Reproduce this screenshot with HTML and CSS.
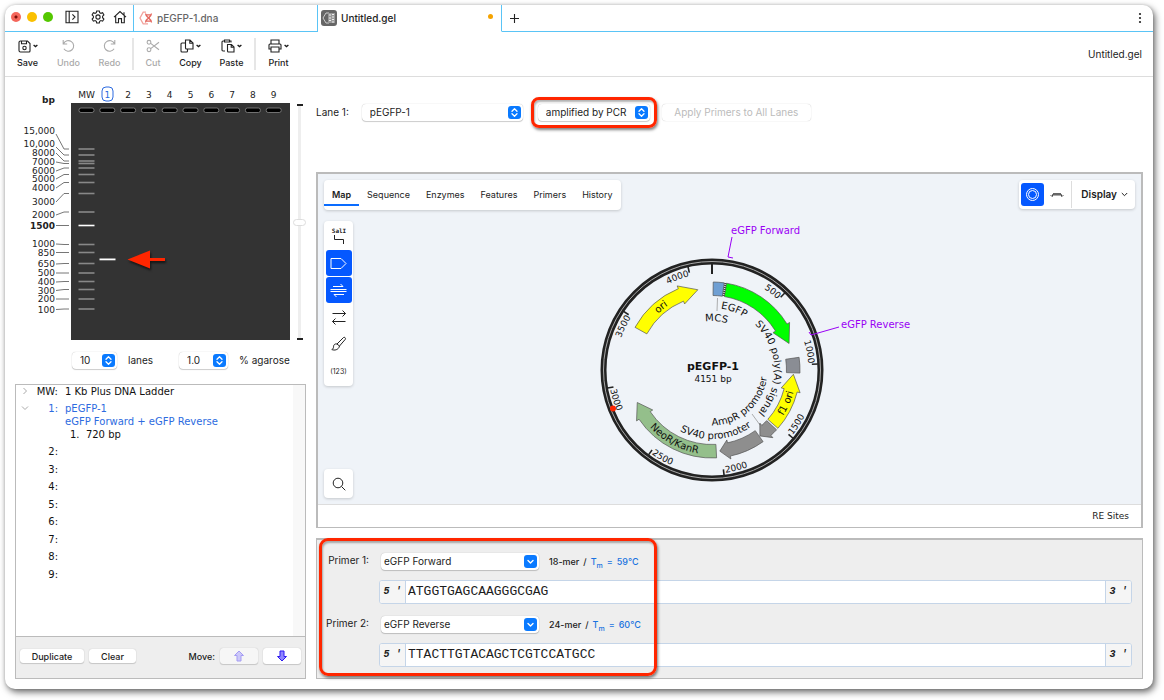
FILE: index.html
```html
<!DOCTYPE html>
<html lang="en">

<head>
  <meta charset="UTF-8" />
  <meta name="viewport" content="width=device-width, initial-scale=1.0" />
  <title>Untitled.gel</title>
  <link rel="stylesheet" href="styles.css">
</head>

<body>
  <svg class="symbols" aria-hidden="true">
    <symbol id="stepper" viewBox="0 0 13 13">
      <rect width="13" height="13" rx="3" fill="#0a7aff" />
      <path d="M4 5.2 6.5 2.7 9 5.2M4 7.8l2.5 2.5L9 7.8" fill="none" stroke="#fff" stroke-width="1.3" stroke-linecap="round" stroke-linejoin="round" />
    </symbol>
    <symbol id="dropdown" viewBox="0 0 13 13">
      <rect width="13" height="13" rx="3" fill="#0a7aff" />
      <path d="M4 5.4 6.5 7.9 9 5.4" fill="none" stroke="#fff" stroke-width="1.4" stroke-linecap="round" stroke-linejoin="round" />
    </symbol>
    <symbol id="caret" viewBox="0 0 5 4">
      <path d="M.6.9 2.5 2.6 4.4.9" fill="none" stroke="currentColor" stroke-width="1.3" />
    </symbol>
  </svg>

  <div class="window">
    <header class="titlebar">
      <div class="controls">
        <span class="light red"></span>
        <span class="light yellow"></span>
        <span class="light green"></span>
        <button class="icon-button" aria-label="Toggle side panel">
          <svg width="14" height="14" viewBox="0 0 14 14"><path d="M1 1.2h12v11.6H1zM4.2 1.2v11.6M7.4 4.4 10 7l-2.6 2.6" /></svg>
        </button>
        <button class="icon-button gear" aria-label="Settings">
          <svg width="14" height="14" viewBox="0 0 14 14"><path d="M5.7 1h2.6l.4 1.7 1.2.6 1.7-.6 1.3 2.2-1.3 1.3v1.5l1.3 1.3-1.3 2.2-1.7-.6-1.2.7-.4 1.7H5.7l-.4-1.7-1.2-.7-1.7.6L1.1 9l1.3-1.3V6.2L1.1 4.9l1.3-2.2 1.7.6 1.2-.6z" /><circle cx="7" cy="7" r="2.1" /></svg>
        </button>
        <button class="icon-button" aria-label="Home">
          <svg width="14" height="14" viewBox="0 0 14 14"><path d="M1 7.2 7 1.6l6 5.6M2.7 6.2v6.6h2.8V8.6h3v4.2h2.8V6.2M11 5V2.2" /></svg>
        </button>
      </div>
      <nav class="tabs">
        <a class="tab" href="#">
          <svg width="14" height="14" viewBox="0 0 14 14"><path d="M7 1.2H4.2L1 7l3.2 5.8H9" fill="none" stroke="#f2a29c" stroke-width="1.3" /><path d="M6.5 2.6c0 4 6 4.6 6 8.8M12.5 2.6c0 4-6 4.6-6 8.8M7 3.8h5M7 10.2h5M8.4 7h2.5" fill="none" stroke="#e4685f" stroke-width="1.3" /></svg>
          <span>pEGFP-1.dna</span>
        </a>
        <a class="tab active" href="#">
          <svg width="16" height="16" viewBox="0 0 16 16"><rect width="16" height="16" rx="3" fill="#666" /><path d="M8 3H5L2 8l3 5h3" fill="none" stroke="#ccc" /><path d="M7 3h7v10H7z" fill="#999" /><path d="M8 5h2M8 8h2M8 10.5h2M11 4.5h2M11 7h2M11 9.5h2M11 12h2" stroke="#eee" /></svg>
          <span>Untitled.gel</span>
          <i class="modified"></i>
        </a>
        <div class="tab-rest">
          <button class="icon-button" aria-label="New tab">
            <svg width="9" height="9" viewBox="0 0 9 9"><path d="M4.5 0v9M0 4.5h9" /></svg>
          </button>
          <button class="icon-button" aria-label="More">
            <svg width="4" height="12" viewBox="0 0 4 12"><g fill="#222" stroke="none"><circle cx="2" cy="2" r="1.1" /><circle cx="2" cy="6" r="1.1" /><circle cx="2" cy="10" r="1.1" /></g></svg>
          </button>
        </div>
      </nav>
    </header>

    <div class="toolbar">
      <button class="tool">
        <span class="tool-icon"><svg width="13" height="13" viewBox="0 0 13 13"><path d="M2.5 1h7L12 3.5V11a1 1 0 0 1-1 1H2.5A1.5 1.5 0 0 1 1 10.5v-8A1.5 1.5 0 0 1 2.5 1zM3.5 1.2v2.6h5V1.2" /><circle cx="6.5" cy="8" r="1.7" /></svg><svg class="caret"><use href="#caret" /></svg></span>
        Save
      </button>
      <button class="tool" disabled>
        <span class="tool-icon"><svg width="13" height="14" viewBox="0 0 13 14"><path d="M1.2 1v4h4M1.5 4.8a5.3 5.3 0 1 1 .4 5" /></svg></span>
        Undo
      </button>
      <button class="tool" disabled>
        <span class="tool-icon"><svg width="13" height="14" viewBox="0 0 13 14"><path d="M11.8 1v4h-4M11.5 4.8a5.3 5.3 0 1 0-.4 5" /></svg></span>
        Redo
      </button>
      <span class="divider"></span>
      <button class="tool narrow" disabled>
        <span class="tool-icon"><svg width="14" height="14" viewBox="0 0 14 14"><circle cx="3" cy="3.3" r="1.9" /><circle cx="3" cy="10.7" r="1.9" /><path d="m4.7 4.4 8.3 6.3M4.7 9.6 13 3.3" /></svg></span>
        Cut
      </button>
      <button class="tool">
        <span class="tool-icon"><svg width="14" height="14" viewBox="0 0 14 14"><path d="M5.5 1H10l3 3v6H6.5a1 1 0 0 1-1-1zM9.8 1v3.2H13M5.5 4H2a1 1 0 0 0-1 1v7a1 1 0 0 0 1 1h4.5a1 1 0 0 0 1-1v-2" /></svg><svg class="caret"><use href="#caret" /></svg></span>
        Copy
      </button>
      <button class="tool">
        <span class="tool-icon"><svg width="14" height="14" viewBox="0 0 14 14"><path d="M4 12H2a1 1 0 0 1-1-1V3a1 1 0 0 1 1-1h1.5M8.5 2H10v1.5M3.5 1h5v2h-5zM6.5 5.5h4L13 8v5H7.5a1 1 0 0 1-1-1zM10.2 5.5v2.7H13" /></svg><svg class="caret"><use href="#caret" /></svg></span>
        Paste
      </button>
      <span class="divider"></span>
      <button class="tool">
        <span class="tool-icon"><svg width="14" height="14" viewBox="0 0 14 14"><path d="M3 5V1h8v4M3 10H1V6a1 1 0 0 1 1-1h10a1 1 0 0 1 1 1v4h-2M3 8h8v5H3z" /></svg><svg class="caret"><use href="#caret" /></svg></span>
        Print
      </button>
      <span class="document-name">Untitled.gel</span>
    </div>

    <main class="content">
      <section class="gel-column">
        <div class="gel-row">
          <svg id="gel" class="gel" viewBox="0 0 278 268" role="img" aria-label="Simulated agarose gel">
            <rect x="56" y="26" width="219" height="237" fill="#333" />
            <text class="bold" x="40" y="26" text-anchor="end">bp</text>
            <rect x="87" y="10" width="11" height="14" rx="4" fill="none" stroke="#2d6be0" />
          </svg>
          <div class="exposure">
            <span class="mark"></span>
            <input type="range" min="0" max="100" value="50" aria-label="Band intensity" />
            <span class="mark"></span>
          </div>
        </div>

        <div class="gel-options">
          <span class="popup lanes"><select id="lanes"><option>10</option></select><svg><use href="#stepper" /></svg></span>
          <label for="lanes">lanes</label>
          <span class="popup agarose"><select id="agarose"><option>1.0</option></select><svg><use href="#stepper" /></svg></span>
          <label for="agarose">% agarose</label>
        </div>

        <div class="lane-panel">
          <div class="lane-list">
            <div class="lane-row">
              <svg class="disclosure" viewBox="0 0 8 8"><path d="M2.5 1 5.5 4l-3 3" /></svg>
              <b>MW:</b>
              <span>1 Kb Plus DNA Ladder</span>
            </div>
            <div class="lane-row selected">
              <svg class="disclosure" viewBox="0 0 8 8"><path d="M1 2.5 4 5.5l3-3" /></svg>
              <b>1:</b>
              <div>
                <p>pEGFP-1</p>
                <p>eGFP Forward + eGFP Reverse</p>
                <p class="fragment">1.&nbsp; 720 bp</p>
              </div>
            </div>
            <div class="empty-lanes">
              <span>2:</span>
              <span>3:</span>
              <span>4:</span>
              <span>5:</span>
              <span>6:</span>
              <span>7:</span>
              <span>8:</span>
              <span>9:</span>
            </div>
          </div>
          <div class="lane-actions">
            <button class="push">Duplicate</button>
            <button class="push clear">Clear</button>
            <span class="move-label">Move:</span>
            <button class="push move" aria-label="Move up" disabled>
              <svg width="12" height="12" viewBox="0 0 12 12"><path d="M6 1 1.5 5.5H4V11h4V5.5h2.5z" /></svg>
            </button>
            <button class="push move" aria-label="Move down">
              <svg width="12" height="12" viewBox="0 0 12 12"><path d="M6 11 1.5 6.5H4V1h4v5.5h2.5z" /></svg>
            </button>
          </div>
        </div>
      </section>

      <section class="lane-column">
        <div class="lane-source">
          <label for="source">Lane 1:</label>
          <span class="popup source"><select id="source"><option>pEGFP-1</option></select><svg><use href="#stepper" /></svg></span>
          <span class="highlight">
            <span class="popup"><select aria-label="Treatment"><option>amplified by PCR</option></select><svg><use href="#stepper" /></svg></span>
          </span>
          <button class="apply" disabled>Apply Primers to All Lanes</button>
        </div>

        <div class="map-panel">
          <div class="map-view">
            <div class="map-top">
              <nav class="views card">
                <button class="active">Map</button>
                <button>Sequence</button>
                <button>Enzymes</button>
                <button>Features</button>
                <button>Primers</button>
                <button>History</button>
              </nav>
              <div class="display card">
                <button class="square on" aria-label="Circular">
                  <svg width="15" height="15" viewBox="0 0 15 15"><circle cx="7.5" cy="7.5" r="6" /><circle cx="7.5" cy="7.5" r="4" /></svg>
                </button>
                <button class="square" aria-label="Linear">
                  <svg width="14" height="6" viewBox="0 0 14 6"><path d="M0 3.5h14" stroke="#aaa" /><path d="M3 1.5h8M3 2.5h8" stroke="#666" /><path d="M2 5l1-3M12 5l-1-3" stroke="#444" /></svg>
                </button>
                <button class="display-menu">Display <svg width="7" height="5" viewBox="0 0 7 5"><path d="m.8 1 2.7 2.7L6.2 1" /></svg></button>
              </div>
            </div>
            <div class="map-body">
              <div class="side">
                <div class="map-tools card">
                  <button class="square" aria-label="Enzymes">
                    <svg width="16" height="20" viewBox="0 0 16 20"><text x="8" y="7" text-anchor="middle">SalI</text><path d="M3.5 9v4.5h9V18" /></svg>
                  </button>
                  <button class="square on" aria-label="Features">
                    <svg width="17" height="13" viewBox="0 0 17 13"><path d="M1 1.5h10l5 5-5 5H1z" /></svg>
                  </button>
                  <button class="square on" aria-label="Primers">
                    <svg width="17" height="15" viewBox="0 0 17 15"><path d="M3 3.5h10L10.5 1M14 11.5H4L6.5 14" /><path d="M.5 6.5h16M.5 8.5h16" /></svg>
                  </button>
                  <button class="square" aria-label="ORFs">
                    <svg width="16" height="16" viewBox="0 0 16 16"><path d="M1.5 4.5h13M11.5 1.5l3 3-3 3M14.5 12.5h-13M4.5 9.5l-3 3 3 3" /></svg>
                  </button>
                  <button class="square" aria-label="Colors">
                    <svg width="16" height="16" viewBox="0 0 16 16"><path d="m6 8 6.5-6.5c.8-.8 2.7.6 1.8 1.8L8.5 10zM6 8c-2-.5-3.5.7-3.5 2.8 0 1.4-.6 2.2-1.7 2.7 2.5 1.2 6.7.6 7.7-3.5" /></svg>
                  </button>
                  <button class="square number">(123)</button>
                </div>
                <button class="search card" aria-label="Find">
                  <svg width="14" height="14" viewBox="0 0 14 14"><circle cx="6" cy="6" r="4.8" /><path d="m9.5 9.5 3.8 3.8" /></svg>
                </button>
              </div>
              <svg id="plasmid" class="plasmid" viewBox="-133 -149 330 275" role="img" aria-label="pEGFP-1 plasmid map">
                <circle r="108.5" fill="none" stroke="#222" stroke-width="6" />
                <circle r="108.5" fill="none" stroke="#aaa" stroke-width="1" />
                <path d="M0-107v11" stroke="#222" stroke-width="2" />
                <path d="M5.5-72 5-59M40 44l8 11" fill="none" stroke="#999" stroke-width=".8" />
                <path class="primer-line" d="m20-133-4 20 5 1M97-38l2 3 28-8" />
                <text class="primer-name" x="19" y="-136">eGFP Forward</text>
                <text class="primer-name" x="129" y="-42">eGFP Reverse</text>
                <text class="plasmid-name" x="1" y="0" text-anchor="middle">pEGFP-1</text>
                <text x="1" y="12" text-anchor="middle">4151 bp</text>
              </svg>
            </div>
          </div>
          <div class="map-footer">RE Sites</div>
        </div>

        <div class="primer-panel">
          <div class="primer">
            <label for="primer1">Primer 1:</label>
            <span class="popup combo"><select id="primer1"><option>eGFP Forward</option></select><svg><use href="#dropdown" /></svg></span>
            <span class="primer-info"><span>18-mer</span><span>/</span><a href="#">T<sub>m</sub></a><a href="#">=</a><a href="#">59°C</a></span>
            <div class="sequence">
              <i>5 '</i>
              <input type="text" value="ATGGTGAGCAAGGGCGAG" aria-label="Primer 1 sequence" />
              <i>3 '</i>
            </div>
          </div>
          <div class="primer">
            <label for="primer2">Primer 2:</label>
            <span class="popup combo"><select id="primer2"><option>eGFP Reverse</option></select><svg><use href="#dropdown" /></svg></span>
            <span class="primer-info"><span>24-mer</span><span>/</span><a href="#">T<sub>m</sub></a><a href="#">=</a><a href="#">60°C</a></span>
            <div class="sequence">
              <i>5 '</i>
              <input type="text" value="TTACTTGTACAGCTCGTCCATGCC" aria-label="Primer 2 sequence" />
              <i>3 '</i>
            </div>
          </div>
          <div class="callout"></div>
        </div>
      </section>
    </main>
  </div>

  <script>
    const SVG = "http://www.w3.org/2000/svg";

    function add(parent, tag, attrs, text) {
      const el = document.createElementNS(SVG, tag);
      for (const key in attrs) el.setAttribute(key, attrs[key]);
      if (text) el.textContent = text;
      parent.appendChild(el);
      return el;
    }

    // ---- gel ----
    const gel = document.getElementById("gel");
    const lanes = ["MW", "1", "2", "3", "4", "5", "6", "7", "8", "9"];
    const laneX = (i) => 71.5 + i * 20.8;

    lanes.forEach((name, i) => {
      add(gel, "text", { x: laneX(i), y: 20.5, "text-anchor": "middle", class: i === 1 ? "current" : "" }, name);
      add(gel, "rect", { x: laneX(i) - 7.5, y: 31, width: 15, height: 4.5, rx: 2, fill: "#000", stroke: "#888", "stroke-width": 0.8 });
    });

    // [size, label y, band y]
    const ladder = [
      ["15,000", 54, 72], ["10,000", 67, 78], ["8000", 76, 84], ["7000", 85, 86.5],
      ["6000", 94, 91], ["5000", 102, 97.5], ["4000", 111, 105.5], ["3000", 125, 116.5],
      ["2000", 138, 135], ["1500", 148.5, 148.5], ["1000", 167, 167.5], ["850", 175.5, 175.5],
      ["650", 187, 186.5], ["500", 196, 196], ["400", 205, 204.5], ["300", 213.5, 212.5],
      ["200", 222, 222], ["100", 232.5, 232],
    ];
    ladder.forEach(([size, y, band]) => {
      const strong = size === "1500";
      add(gel, "text", { x: 40, y: y + 3, "text-anchor": "end", class: strong ? "bold" : "" }, size);
      const from = band - y > 8 ? y + 3 : y;
      add(gel, "path", { d: `M41 ${from} L49 ${band} H54`, fill: "none", stroke: "#666", "stroke-width": 0.9 });
      add(gel, "rect", { x: 63.5, y: band - 0.8, width: 16, height: 1.6, fill: strong ? "#fff" : "#888" });
    });
    add(gel, "rect", { x: 84.5, y: 181.5, width: 16, height: 1.8, fill: "#fff" });
    add(gel, "path", { d: "M112.5 182.4 135 173.5V181h15v3h-15v7.5z", fill: "#ff2600", class: "pointer" });

    // ---- plasmid map ----
    const map = document.getElementById("plasmid");
    const LENGTH = 4151;

    function point(r, deg) {
      const a = (deg * Math.PI) / 180;
      return `${(r * Math.sin(a)).toFixed(2)} ${(-r * Math.cos(a)).toFixed(2)}`;
    }

    function arrow(start, base, tip, fill) {
      const cw = tip > start ? 1 : 0;
      const head = base === tip ? "" : `L${point(91, base)} L${point(81.5, tip)} L${point(71.5, base)}`;
      add(map, "path", {
        d: `M${point(88, start)} A88 88 0 0 ${cw} ${point(88, base)} ${head}
            L${point(74.5, base)} A74.5 74.5 0 0 ${1 - cw} ${point(74.5, start)}Z`,
        fill, stroke: "#555", "stroke-width": 0.7,
      });
    }

    let arcs = 0;
    function arcText(text, r, deg, cw, anchor, cls) {
      const id = "arc" + arcs++;
      const from = cw ? deg - 170 : deg + 170;
      const to = cw ? deg + 170 : deg - 170;
      add(map, "path", { id, d: `M${point(r, from)} A${r} ${r} 0 1 ${cw ? 1 : 0} ${point(r, to)}`, fill: "none" });
      const t = add(map, "text", { "text-anchor": anchor, class: cls });
      add(t, "textPath", { href: "#" + id, startOffset: "50%" }, text);
    }

    for (let bp = 500; bp < LENGTH; bp += 500) {
      const deg = (bp / LENGTH) * 360;
      const cw = deg < 100 || deg > 280;
      add(map, "path", { d: `M${point(106, deg)} L${point(100, deg)}`, stroke: "#222", "stroke-width": 1.6 });
      arcText(bp, cw ? 96.5 : 103.5, cw ? deg - 0.5 : deg - 1, cw, cw ? "end" : "start", "tick");
    }

    arrow(0.8, 8, 8, "#6f9fd3");
    arrow(9.5, 58.5, 71, "#00ff00");
    arrow(81.7, 92, 92, "#8a8d94");
    arrow(131.5, 104.5, 93, "#ffff00");
    arrow(132.8, 138, 144, "#8e8e8e");
    arrow(144.5, 168, 174.5, "#8e8e8e");
    arrow(177, 236, 246.5, "#94bf8b");
    arrow(299, 337.5, 350, "#ffff00");

    // dashed joint between MCS and EGFP
    add(map, "path", { d: `M${point(88, 8.8)} L${point(74.5, 8.8)}`, stroke: "#333", "stroke-width": 2, "stroke-dasharray": "1 1" });

    arcText("ori", 78, 321, true, "middle", "feature");
    arcText("EGFP", 62, 20, true, "middle", "feature");
    arcText("MCS", 49, 5, true, "middle", "feature");
    arcText("SV40 poly(A) signal", 62.5, 88, true, "middle", "feature");
    arcText("f1 ori", 84.5, 114, false, "middle", "feature");
    arcText("AmpR promoter", 55.5, 139, false, "middle", "feature");
    arcText("SV40 promoter", 69, 176.5, false, "middle", "feature");
    arcText("NeoR/KanR", 84.5, 208.5, false, "middle", "feature");

    add(map, "circle", { cx: -99, cy: 38.5, r: 3, fill: "#ff2600" });
  </script>
</body>

</html>
```

FILE: styles.css
```css
* {
  box-sizing: border-box;
}

body {
  display: flex;
  min-height: 100vh;
  margin: 0;
  padding: 5px 11px 11px 5px;
  background: #fff;
  color: #1c1c1c;
  font: 10px/13px Inter, "Liberation Sans", sans-serif;
}

button,
input,
select {
  margin: 0;
  padding: 0;
  border: 0;
  background: none;
  color: inherit;
  font: inherit;
}

p {
  margin: 0;
}

a {
  color: inherit;
  text-decoration: none;
}

svg {
  display: block;
  flex: none;
}

.symbols {
  position: absolute;
  width: 0;
  height: 0;
}

.window {
  display: flex;
  flex: 1;
  flex-direction: column;
  min-width: 0;
  border-radius: 10px;
  background: #fff;
  box-shadow: 2px 3px 7px rgba(0, 0, 0, 0.6), 0 0 3px rgba(0, 0, 0, 0.15);
}

/* title bar */

.titlebar {
  display: flex;
  height: 27px;
}

.controls,
.tab,
.tab-rest {
  border: 0 solid #5ac4f6;
  border-bottom-width: 1px;
}

.controls {
  display: flex;
  align-items: center;
  width: 129px;
  padding: 0 6px 2px 6px;
  border-right-width: 1px;
}

.light {
  width: 10px;
  height: 10px;
  margin-right: 6px;
  border-radius: 50%;
}

.light.red {
  background: radial-gradient(circle, #7a0e08 1px, #f4665b 2px);
}

.light.yellow {
  background: #fac000;
}

.light.green {
  margin-right: 12px;
  background: #54c700;
}

.icon-button svg,
.tool svg {
  fill: none;
  stroke: #222;
  stroke-width: 1.1;
}

.icon-button.gear {
  margin: 0 8px 0 12px;
}

.tabs {
  display: flex;
  flex: 1;
}

.tab {
  display: flex;
  align-items: center;
  gap: 4px;
  width: 184px;
  padding: 0 8px 0 5px;
  border-right-width: 1px;
  color: #666;
  font-weight: 500;
}

.tab.active {
  padding-left: 3px;
  border-bottom-color: transparent;
  color: #222;
}

.modified {
  width: 5px;
  height: 5px;
  margin: 0 0 3px auto;
  border-radius: 50%;
  background: #f5a300;
}

.tab-rest {
  display: flex;
  flex: 1;
  align-items: center;
  justify-content: space-between;
  padding: 0 11px 0 8px;
}

/* toolbar */

.toolbar {
  display: flex;
  align-items: center;
  height: 45px;
  padding: 0 11px 0 2px;
  border-bottom: 1px solid #ddd;
}

.tool {
  display: flex;
  flex-direction: column;
  align-items: center;
  gap: 4px;
  width: 41px;
  font-size: 9px;
  font-weight: 500;
  line-height: 12px;
}

.tool.narrow {
  width: 34px;
}

.tool-icon {
  display: flex;
  align-items: center;
  gap: 2px;
  height: 14px;
}

.tool .caret {
  width: 5px;
  height: 4px;
}

.tool:disabled {
  color: #aaa;
}

.tool:disabled svg {
  stroke: #aaa;
}

.divider {
  width: 2px;
  height: 32px;
  margin: 0 2px;
  background: #e6e6e6;
}

.document-name {
  margin-left: auto;
}

/* gel */

.content {
  display: grid;
  flex: 1;
  grid-template-columns: 291px 1fr;
  gap: 10px;
  padding: 0 10px 10px;
}

.gel-column,
.lane-column {
  display: flex;
  flex-direction: column;
  min-width: 0;
}

.gel-row {
  display: flex;
}

.gel {
  width: 278px;
  height: 268px;
}

.gel text {
  fill: #222;
  font: 9px "DejaVu Sans", sans-serif;
}

.gel .bold {
  font-weight: bold;
}

.gel .current {
  fill: #2d6be0;
}

.pointer {
  filter: drop-shadow(1px 2px 1px rgba(0, 0, 0, 0.6));
}

.exposure {
  display: flex;
  flex-direction: column;
  align-items: center;
  width: 15px;
  padding: 27px 0 5px;
}

.mark {
  width: 6px;
  height: 2px;
  background: #222;
}

.exposure input {
  flex: 1;
  width: 13px;
  min-height: 0;
  appearance: none;
  writing-mode: vertical-lr;
}

.exposure input::-webkit-slider-runnable-track {
  width: 3px;
  background: #eee;
}

.exposure input::-webkit-slider-thumb {
  width: 13px;
  height: 7px;
  margin-left: -5px;
  appearance: none;
  border: 1px solid #ddd;
  border-radius: 4px;
  background: #fff;
}

.popup {
  position: relative;
  height: 17px;
  border-radius: 4px;
  background: #fff;
  box-shadow: 0 0 1px rgba(0, 0, 0, 0.3), 0 1px 1px rgba(0, 0, 0, 0.18);
}

.popup select {
  display: block;
  width: 100%;
  height: 17px;
  padding: 0 18px 0 8px;
  appearance: none;
}

.popup svg {
  position: absolute;
  top: 2px;
  right: 2px;
  width: 13px;
  height: 13px;
  pointer-events: none;
}

.gel-options {
  display: flex;
  align-items: center;
  padding: 7px 0 15px 57px;
}

.gel-options label {
  margin-left: 11px;
}

.lanes {
  width: 45px;
}

.agarose {
  width: 49px;
  margin-left: 26px;
}

/* lane list */

.lane-panel {
  display: flex;
  flex: 1;
  flex-direction: column;
  border: 1px solid #bbb;
}

.lane-list {
  flex: 1;
  border-right: 12px solid #f8f8f8;
  color: #111;
  font: 10px/13px "DejaVu Sans", sans-serif;
}

.lane-row {
  display: grid;
  grid-template-columns: 8px 22px 1fr;
  column-gap: 7px;
  margin-bottom: 4px;
  padding-left: 5px;
}

.lane-row.selected {
  margin-bottom: 2px;
  color: #2d6be0;
}

.lane-row b {
  justify-self: end;
  font-weight: normal;
}

.disclosure {
  width: 8px;
  height: 8px;
  margin-top: 2px;
  fill: none;
  stroke: #aaa;
}

.fragment {
  padding-left: 5px;
  color: #111;
}

.empty-lanes {
  display: grid;
  grid-template-rows: repeat(8, 1fr);
  align-items: center;
  width: 42px;
  height: 140px;
  text-align: right;
}

.lane-actions {
  display: flex;
  align-items: center;
  gap: 5px;
  height: 42px;
  padding: 0 4px 3px;
  border-top: 1px solid #bbb;
  background: #eee;
  font-size: 9px;
}

.push {
  width: 64px;
  height: 14px;
  border-radius: 3px;
  background: #fff;
  box-shadow: 0 0 1px rgba(0, 0, 0, 0.25), 0 1px 1px rgba(0, 0, 0, 0.15);
  font-weight: 500;
}

.push.clear {
  width: 47px;
}

.move-label {
  margin-left: auto;
  font-weight: 500;
}

.push.move {
  display: flex;
  align-items: center;
  justify-content: center;
  width: 38px;
  height: 16px;
}

.move svg {
  fill: #8f86ff;
  stroke: #2d18f0;
}

.move:disabled {
  background: #f6f6f6;
}

.move:disabled svg {
  opacity: 0.4;
}

/* lane source */

.lane-source {
  display: flex;
  align-items: center;
  height: 95px;
  padding-bottom: 25px;
}

.source {
  width: 161px;
  margin: 0 8px 0 13px;
}

.highlight {
  width: 126px;
  padding: 4px;
  border: 3px solid #ff2600;
  border-radius: 8px;
  box-shadow: 1px 2px 3px rgba(0, 0, 0, 0.5), inset 1px 2px 2px rgba(0, 0, 0, 0.3);
}

.highlight .popup {
  display: block;
}

.apply {
  width: 149px;
  height: 17px;
  margin-left: 5px;
  border-radius: 4px;
  box-shadow: 0 0 1px rgba(0, 0, 0, 0.3);
  color: #bbb;
}

/* map */

.map-panel {
  display: flex;
  flex: 1;
  flex-direction: column;
  margin-bottom: 10px;
  border: 2px solid #bbb;
  border-width: 2px 2px 1px;
}

.map-view {
  display: flex;
  flex: 1;
  flex-direction: column;
  gap: 11px;
  padding: 6px;
  background: #eff3f8;
}

.card {
  border-radius: 4px;
  background: #fff;
  box-shadow: 0 1px 3px rgba(0, 0, 0, 0.18);
}

.map-top {
  display: flex;
  justify-content: space-between;
}

.views {
  display: flex;
  height: 30px;
}

.views button {
  height: 26px;
  padding: 4px 8px 0;
  border-bottom: 2px solid transparent;
  font-size: 9px;
}

.views .active {
  border-color: #0a6cff;
  font-weight: 600;
}

.square {
  display: flex;
  align-items: center;
  justify-content: center;
  width: 26px;
  height: 26px;
  border-radius: 3px;
}

.square svg,
.search svg,
.display-menu svg {
  fill: none;
  stroke: #222;
}

.square.on {
  background: #0558ff;
}

.square.on svg {
  stroke: #fff;
}

.square svg text {
  fill: #222;
  stroke: none;
  font: bold 6px "DejaVu Sans Mono", monospace;
}

.square.number {
  font-size: 7px;
}

.display {
  display: flex;
  align-items: center;
  gap: 1px;
  height: 29px;
  padding: 0 2px;
}

.display .square {
  width: 23px;
  height: 23px;
}

.display-menu {
  display: flex;
  align-items: center;
  gap: 4px;
  height: 27px;
  margin-left: 2px;
  padding: 0 5px 0 9px;
  border-left: 1px solid #ddd;
  font-weight: 600;
}

.map-body {
  display: flex;
  flex: 1;
}

.side {
  display: flex;
  flex-direction: column;
  justify-content: space-between;
}

.map-tools {
  display: flex;
  flex-direction: column;
  align-items: center;
  gap: 1px;
  width: 29px;
  padding: 2px 0;
}

.search {
  display: grid;
  place-items: center;
  width: 29px;
  height: 29px;
}

.plasmid {
  width: 330px;
  height: 275px;
  margin: 0 auto;
  overflow: visible;
}

.plasmid text {
  fill: #111;
  font: 9px "DejaVu Sans", sans-serif;
}

.plasmid .feature {
  font-size: 10px;
}

.plasmid .plasmid-name {
  font-size: 11px;
  font-weight: bold;
}

.plasmid .primer-name {
  fill: #9a00f5;
  font-size: 10px;
}

.primer-line {
  fill: none;
  stroke: #9a00f5;
  stroke-width: 1;
}

.map-footer {
  height: 23px;
  padding-right: 12px;
  border-top: 1px solid #ddd;
  font: 9px/23px "DejaVu Sans", sans-serif;
  text-align: right;
}

/* primers */

.primer-panel {
  position: relative;
  display: grid;
  gap: 12px;
  padding: 13px 10px 11px 8px;
  border: 1px solid #bbb;
  border-top-width: 2px;
  background: #eee;
}

.primer {
  display: grid;
  grid-template-columns: 46px 158px 1fr;
  align-items: center;
  gap: 10px;
}

.primer label {
  padding: 0 2px 3px 0;
  justify-self: end;
  white-space: nowrap;
}

.combo select {
  padding-left: 3px;
}

.primer-info {
  display: flex;
  gap: 4px;
  font-size: 9px;
  font-weight: 500;
}

.primer-info a {
  color: #1a73e0;
}

.primer-info sub {
  font-size: 7px;
  line-height: 0;
}

.sequence {
  display: grid;
  grid-column: 2 / -1;
  grid-template-columns: 25px 1fr 25px;
  height: 24px;
  margin-left: -2px;
  overflow: hidden;
  border: 1px solid #c5d5e8;
  border-radius: 3px;
  background: #fff;
  font: 13px/22px "Liberation Mono", monospace;
}

.sequence i {
  background: #f5f5f5;
  font: italic bold 10px/22px "Liberation Mono", monospace;
  text-align: center;
}

.sequence input {
  min-width: 0;
  padding: 0 2px;
  border: solid #c5d5e8;
  border-width: 0 1px;
}

.callout {
  position: absolute;
  top: -2px;
  left: 2px;
  width: 338px;
  height: 138px;
  border: 3px solid #ff2600;
  border-radius: 9px;
  box-shadow: 1px 2px 3px rgba(0, 0, 0, 0.5), inset 1px 2px 2px rgba(0, 0, 0, 0.3);
  pointer-events: none;
}
```
